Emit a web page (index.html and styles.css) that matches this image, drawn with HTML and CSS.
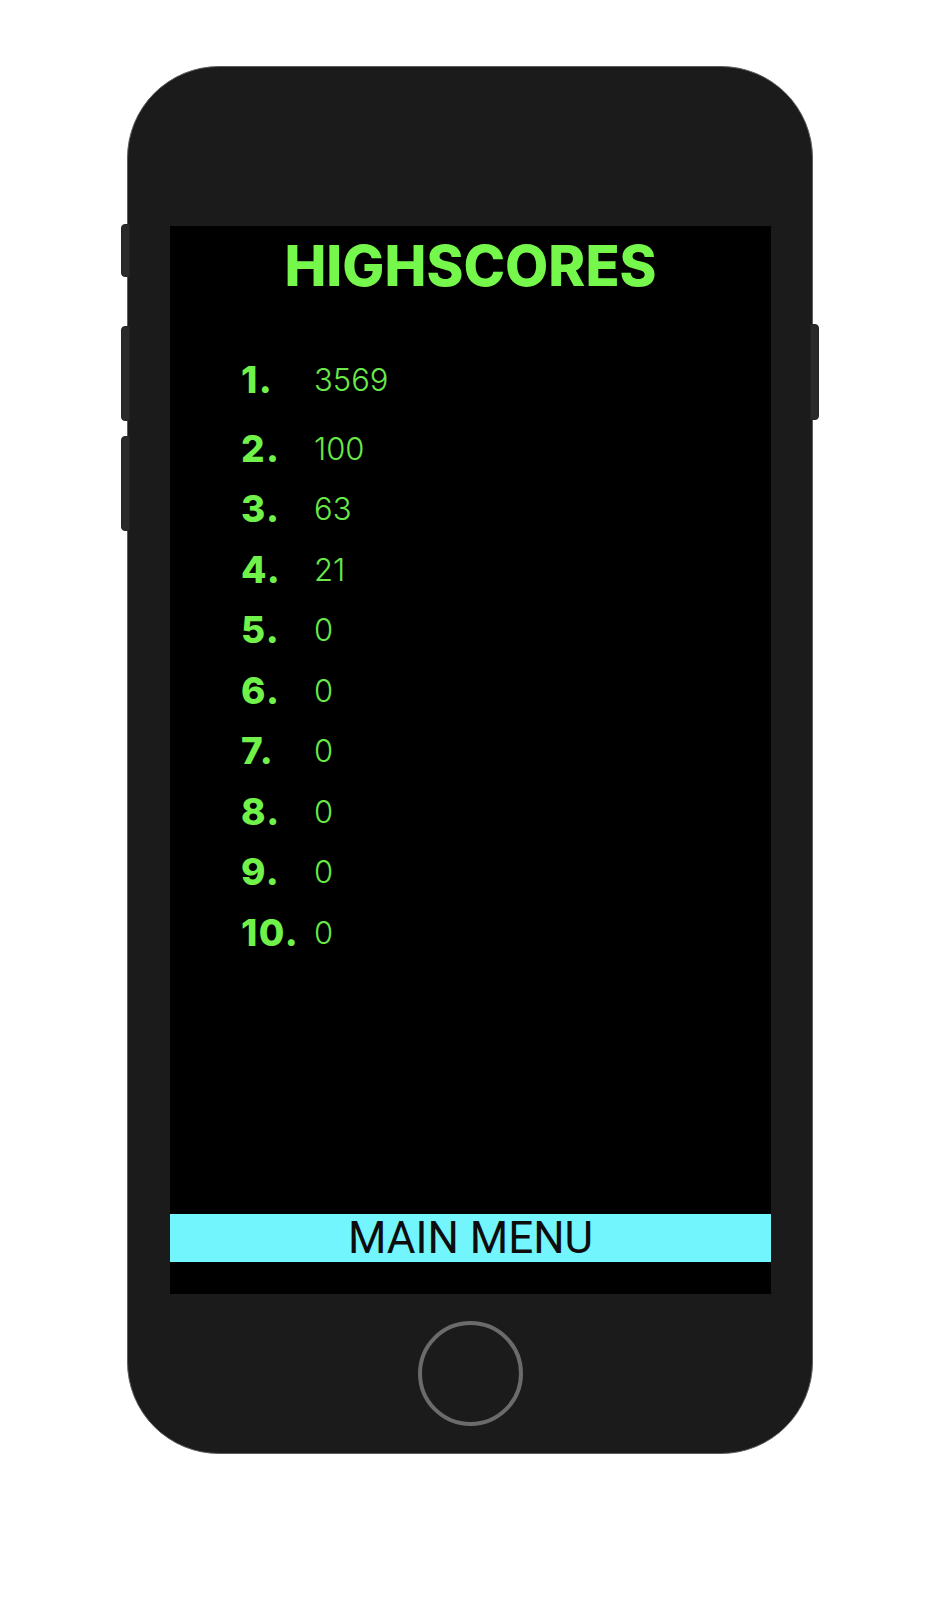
FILE: index.html
```html
<!DOCTYPE html>
<html lang="en">
<head>
<meta charset="utf-8">
<title>Highscores</title>
<link rel="stylesheet" href="styles.css">
</head>
<body>
<div class="stage">
  <div class="phone">
    <span class="side-btn side-btn--mute"></span>
    <span class="side-btn side-btn--vol-up"></span>
    <span class="side-btn side-btn--vol-down"></span>
    <span class="side-btn side-btn--power"></span>
    <div class="screen">
      <h1 class="title">HIGHSCORES</h1>
      <ol class="scores">
        <li class="row row--first"><span class="rank">1.</span><span class="score">3569</span></li>
        <li class="row"><span class="rank">2.</span><span class="score">100</span></li>
        <li class="row"><span class="rank">3.</span><span class="score">63</span></li>
        <li class="row"><span class="rank">4.</span><span class="score">21</span></li>
        <li class="row"><span class="rank">5.</span><span class="score">0</span></li>
        <li class="row"><span class="rank">6.</span><span class="score">0</span></li>
        <li class="row"><span class="rank">7.</span><span class="score">0</span></li>
        <li class="row"><span class="rank">8.</span><span class="score">0</span></li>
        <li class="row"><span class="rank">9.</span><span class="score">0</span></li>
        <li class="row"><span class="rank">10.</span><span class="score">0</span></li>
      </ol>
      <button class="menu-btn" type="button">MAIN MENU</button>
    </div>
    <div class="home-btn"></div>
  </div>
</div>
</body>
</html>
```

FILE: styles.css
```css
* {
  box-sizing: border-box;
}

html, body {
  margin: 0;
  padding: 0;
  background: #ffffff;
}

.stage {
  padding: 66px 0 0 127px;
}

.phone {
  position: relative;
  width: 686px;
  height: 1388px;
  background: #1b1b1b;
  border: 1px solid #5e5e5e;
  border-radius: 92px;
  display: flex;
  flex-direction: column;
  align-items: flex-start;
}

.side-btn {
  position: absolute;
  width: 9px;
  background: #2a2a2a;
  border: 1px solid #232323;
}

.side-btn--mute {
  left: -7px;
  top: 157px;
  height: 53px;
  border-radius: 4px 0 0 4px;
}

.side-btn--vol-up {
  left: -7px;
  top: 259px;
  height: 95px;
  border-radius: 4px 0 0 4px;
}

.side-btn--vol-down {
  left: -7px;
  top: 369px;
  height: 95px;
  border-radius: 4px 0 0 4px;
}

.side-btn--power {
  right: -7px;
  top: 257px;
  height: 96px;
  border-radius: 0 4px 4px 0;
}

.screen {
  margin: 159px 0 0 42px;
  width: 601px;
  height: 1068px;
  background: #000000;
  display: flex;
  flex-direction: column;
}

.title {
  margin: 12px 0 0;
  font-family: "Inter", "Liberation Sans", sans-serif;
  font-weight: 800;
  font-size: 56px;
  line-height: 56px;
  color: #76f74b;
  text-align: center;
}

.scores {
  list-style: none;
  margin: 56px 0 0;
  padding: 0 0 0 71px;
}

.row {
  display: flex;
  align-items: center;
  height: 60.5px;
}

.row--first {
  margin-bottom: 8px;
}

.rank {
  width: 73px;
  font-family: "Inter", "Liberation Sans", sans-serif;
  font-weight: 800;
  font-size: 37px;
  line-height: 40px;
  letter-spacing: 1.5px;
  color: #70f24a;
}

.score {
  font-family: "Inter", "Liberation Sans", sans-serif;
  font-weight: 300;
  font-size: 31px;
  line-height: 40px;
  color: #6ae848;
}

.menu-btn {
  margin: auto 0 32px;
  width: 100%;
  height: 48px;
  padding: 0;
  border: 0;
  background: #72f5fc;
  color: #0d0d0d;
  font-family: "Roboto", "Liberation Sans", sans-serif;
  font-weight: 400;
  font-size: 44px;
  line-height: 48px;
  text-align: center;
}

.home-btn {
  align-self: center;
  margin-top: 27px;
  width: 105px;
  height: 105px;
  border: 4px solid #6b6b6b;
  border-radius: 50%;
}
```
